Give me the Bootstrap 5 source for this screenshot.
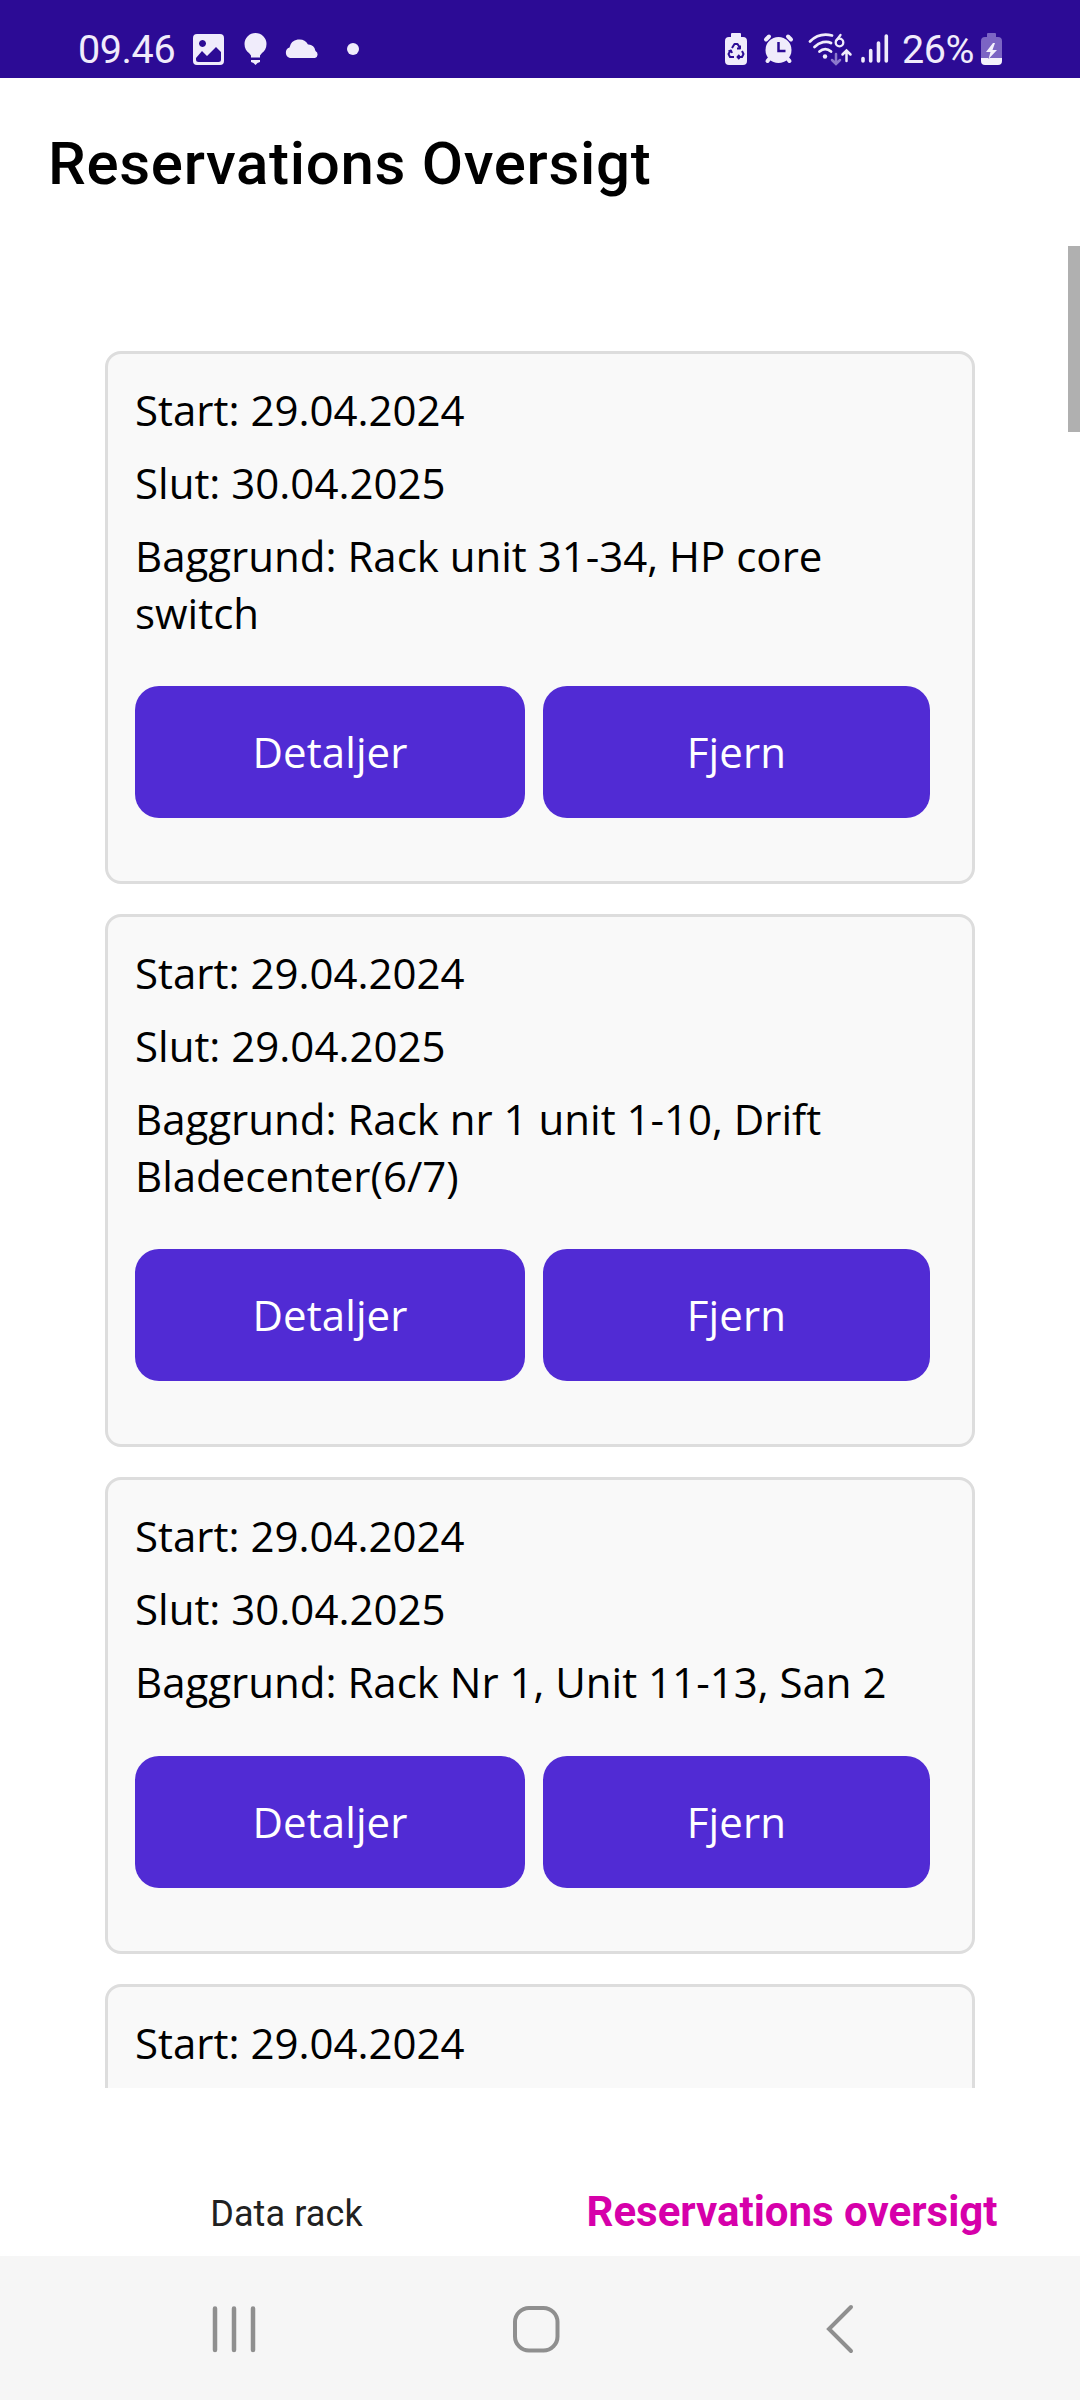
<!DOCTYPE html>
<html lang="da">
<head>
<meta charset="utf-8">
<meta name="viewport" content="width=device-width, initial-scale=1">
<title>Reservations Oversigt</title>
<link href="https://cdn.jsdelivr.net/npm/bootstrap@5.3.0/dist/css/bootstrap.min.css" rel="stylesheet">
<style>
body{font-family:"Open Sans","Noto Sans",sans-serif;color:#000;background:#fff}
.screen{width:1080px;height:2400px}
.roboto{font-family:Roboto,sans-serif}
.statusbar{height:78px;background:#2c0b95;color:#f0ecfb;padding:27px 77px 0 78px}
.statusbar svg{display:block;flex:none;height:44px}
.clock{font-size:39.5px;line-height:45px;letter-spacing:-.4px;width:106px}
.percent{width:75px;letter-spacing:-.5px}
.appbar{height:168px;padding:51px 0 0 48px}
.appbar h1{font-size:60px;line-height:70px;font-weight:500;margin:0;letter-spacing:.68px}
.scroller{height:1842px;padding:105px 105px 0}
.thumb{top:0;right:0;width:12px;height:186px;background:#b0b0b0}
.booking{border:3px solid #ddd;border-radius:16px;background:#f9f9f9;padding:27px 42px 63px 27px;margin-bottom:30px;font-size:42px;line-height:57px}
.booking p{margin:0 0 16px}
.booking p.reason{margin-bottom:45px;margin-right:-15px;min-height:58px}
.actions{gap:18px}
.booking .btn{width:390px;height:132px;border-radius:24px;background:#512bd4;border:0;color:#fff;font-size:42px;padding:0 0 2px;letter-spacing:.1px}
.booking .btn+.btn{width:387px}
.tabs{height:168px;padding:0 36px}
.tabs a{width:504px;color:#212121;font-size:36px;line-height:50px;padding-top:101px;letter-spacing:.1px}
.tabs a:first-child{padding-right:3px}
.tabs a.current{color:#d600aa;font-size:42px;font-weight:700;padding-top:99px;letter-spacing:0}
.sysnav{height:144px;background:#f6f6f6;padding:46px 0 0 208px}
.sysnav svg{display:block}
.home{margin:0 258px 0 250px}
</style>
</head>
<body>
<div class="screen d-flex flex-column overflow-hidden">
  <header class="statusbar roboto d-flex justify-content-between flex-shrink-0">
    <div class="d-flex">
      <span class="clock">09.46</span>
      <svg width="190" height="44" viewBox="184 27 190 44" fill="currentColor">
        <path fill-rule="evenodd" d="M197 34h23a4 4 0 0 1 4 4v23a4 4 0 0 1-4 4h-23a4 4 0 0 1-4-4V38a4 4 0 0 1 4-4zm5.500 6a3.500 3.500 0 1 0 .01 0zM196 58v1.500a2.500 2.500 0 0 0 2.500 2.500h20a2.500 2.500 0 0 0 2.500-2.500V52l-5-5-9 9-5-5z"/>
        <path d="M255.500 33a11 11 0 0 0-11 11c0 4.500 2 7 4.500 9l2 2.500V57.500h9V55.500l2-2.500c2.500-2 4.500-4.500 4.500-9a11 11 0 0 0-11-11zM251 60h9v2l-2.500 1-2 2-2-2-2.500-1z"/>
        <path d="M290 58a5.500 5.500 0 0 1-.5-10.500 10 10 0 0 1 18.500-3 7 7 0 0 1 7.500 6.500 3.800 3.800 0 0 1-.5 7z"/>
        <circle cx="353" cy="49" r="6"/>
      </svg>
    </div>
    <div class="d-flex">
      <svg width="182" height="44" viewBox="720 27 182 44" fill="none" stroke="currentColor" stroke-linecap="round">
        <path fill="currentColor" stroke="none" d="M731 37v-3a1 1 0 0 1 1-1h8a1 1 0 0 1 1 1v3h2a4 4 0 0 1 4 4v20a4 4 0 0 1-4 4h-14a4 4 0 0 1-4-4V41a4 4 0 0 1 4-4z"/>
        <path stroke="#2c0b95" stroke-width="2" stroke-linecap="butt" stroke-linejoin="round" d="M732 48l2.500-4h3l2.500 4M742 51l1.500 3-1.500 3h-4.500M734 57h-4l-1.500-3 2-3.500M740 45.500v3h-3M739.500 55l-2 2 2 2M728.500 51.500l2.500-1 1 2.500"/>
        <circle cx="778.500" cy="50" r="13" fill="currentColor" stroke="none"/>
        <path stroke-width="4" d="M766 39.500l3-3M791 39.500l-3-3M770 58l-2.500 3M787 58l2.500 3"/>
        <path stroke="#2c0b95" stroke-width="2.500" stroke-linecap="butt" d="M778.500 42v9h7"/>
        <path stroke-width="2.800" d="M810 41.500c6-6 14-8 22-6M814.500 47c5-5 12-6.500 16.500-4M819.500 51.500c3.500-3 8-3 11.500 0"/>
        <circle cx="825" cy="56.500" r="2.200" fill="currentColor" stroke="none"/>
        <path stroke-width="2.300" d="M840.500 35l-4.500 6"/><circle cx="839.500" cy="42.500" r="3.800" stroke-width="2.300"/>
        <path stroke="#8c79cc" stroke-width="2.500" d="M836 54v9.500M832 60l4 4 4-4"/>
        <path stroke-width="2.500" d="M846.500 61v-10M842.500 54.500l4-4 4 4"/>
        <path stroke-width="3.600" d="M863 58.500v2.500M870.700 50.500V61M878.500 43V61M886.300 36V61"/>
      </svg>
      <span class="clock percent">26%</span>
      <svg width="26" height="44" viewBox="977 27 26 44">
        <path fill="#7c65c4" d="M987 37v-3a1 1 0 0 1 1-1h7a1 1 0 0 1 1 1v3h2a4 4 0 0 1 4 4v17h-21V41a4 4 0 0 1 4-4z"/>
        <path fill="#f4f1fc" d="M981 58h21v3a4 4 0 0 1-4 4h-13a4 4 0 0 1-4-4zM993 43l-7 9h4.500l-2 7 8.500-9h-4.500l2.500-7z"/>
      </svg>
    </div>
  </header>

  <div class="appbar flex-shrink-0"><h1 class="roboto">Reservations Oversigt</h1></div>

  <main class="scroller position-relative overflow-hidden flex-shrink-0">
    <div class="thumb position-absolute"></div>
    <section class="booking">
      <p>Start: 29.04.2024</p>
      <p>Slut: 30.04.2025</p>
      <p class="reason">Baggrund: Rack unit 31-34, HP core switch</p>
      <div class="actions d-flex"><button class="btn">Detaljer</button><button class="btn">Fjern</button></div>
    </section>
    <section class="booking">
      <p>Start: 29.04.2024</p>
      <p>Slut: 29.04.2025</p>
      <p class="reason">Baggrund: Rack nr 1 unit 1-10, Drift Bladecenter(6/7)</p>
      <div class="actions d-flex"><button class="btn">Detaljer</button><button class="btn">Fjern</button></div>
    </section>
    <section class="booking">
      <p>Start: 29.04.2024</p>
      <p>Slut: 30.04.2025</p>
      <p class="reason">Baggrund: Rack Nr 1, Unit 11-13, San 2</p>
      <div class="actions d-flex"><button class="btn">Detaljer</button><button class="btn">Fjern</button></div>
    </section>
    <section class="booking">
      <p>Start: 29.04.2024</p>
      <p>&nbsp;</p>
    </section>
  </main>

  <nav class="tabs roboto d-flex flex-shrink-0">
    <a class="text-center text-decoration-none">Data rack</a>
    <a class="current text-center text-decoration-none">Reservations oversigt</a>
  </nav>

  <footer class="sysnav d-flex flex-shrink-0">
    <svg width="52" height="54" viewBox="208 2302 52 54" fill="none" stroke="#8f8f8f" stroke-width="4.500" stroke-linecap="round"><path d="M215 2308.500v41.500M234 2308.500v41.500M253 2308.500v41.500"/></svg>
    <svg class="home" width="52" height="54" viewBox="510 2302 52 54" fill="none" stroke="#8f8f8f" stroke-width="4"><rect x="515" y="2308" width="42.500" height="42.500" rx="14"/></svg>
    <svg width="36" height="54" viewBox="820 2302 36 54" fill="none" stroke="#8f8f8f" stroke-width="4" stroke-linecap="round"><path d="M851 2307l-22 22 22 22"/></svg>
  </footer>
</div>
<script src="https://cdn.jsdelivr.net/npm/bootstrap@5.3.0/dist/js/bootstrap.bundle.min.js"></script>
</body>
</html>
